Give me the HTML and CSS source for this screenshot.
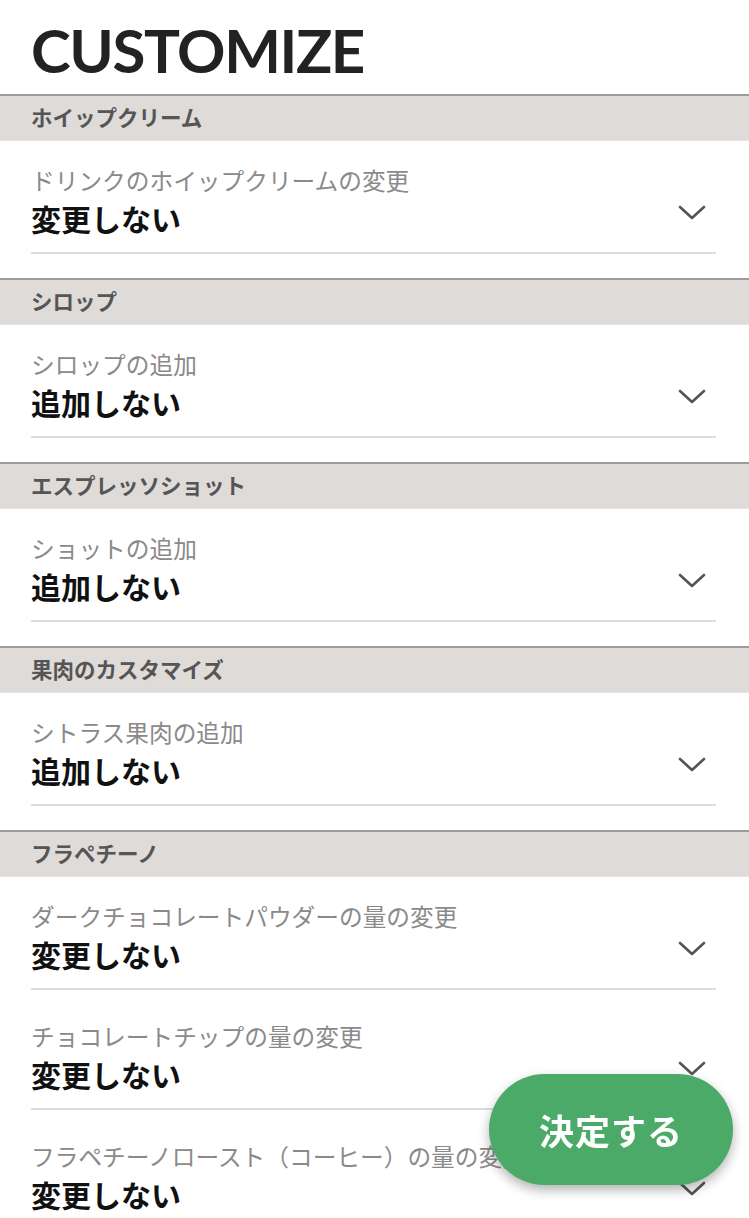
FILE: index.html
```html
<!DOCTYPE html>
<html lang="ja">
<head>
<meta charset="utf-8">
<title>CUSTOMIZE</title>
<link rel="stylesheet" href="styles.css">
</head>
<body>
<header class="page-header">
  <h1 class="title">CUSTOMIZE</h1>
</header>

<section class="group">
  <h2 class="group-title">ホイップクリーム</h2>
  <div class="option">
    <div class="option-label">ドリンクのホイップクリームの変更</div>
    <div class="option-value"><span>変更しない</span><svg class="chev" viewBox="0 0 28 16"><path d="M2 2 L14 13 L26 2"/></svg></div>
  </div>
</section>

<section class="group">
  <h2 class="group-title">シロップ</h2>
  <div class="option">
    <div class="option-label">シロップの追加</div>
    <div class="option-value"><span>追加しない</span><svg class="chev" viewBox="0 0 28 16"><path d="M2 2 L14 13 L26 2"/></svg></div>
  </div>
</section>

<section class="group">
  <h2 class="group-title">エスプレッソショット</h2>
  <div class="option">
    <div class="option-label">ショットの追加</div>
    <div class="option-value"><span>追加しない</span><svg class="chev" viewBox="0 0 28 16"><path d="M2 2 L14 13 L26 2"/></svg></div>
  </div>
</section>

<section class="group">
  <h2 class="group-title">果肉のカスタマイズ</h2>
  <div class="option">
    <div class="option-label">シトラス果肉の追加</div>
    <div class="option-value"><span>追加しない</span><svg class="chev" viewBox="0 0 28 16"><path d="M2 2 L14 13 L26 2"/></svg></div>
  </div>
</section>

<section class="group">
  <h2 class="group-title">フラペチーノ</h2>
  <div class="option">
    <div class="option-label">ダークチョコレートパウダーの量の変更</div>
    <div class="option-value"><span>変更しない</span><svg class="chev" viewBox="0 0 28 16"><path d="M2 2 L14 13 L26 2"/></svg></div>
  </div>
  <div class="option">
    <div class="option-label">チョコレートチップの量の変更</div>
    <div class="option-value"><span>変更しない</span><svg class="chev" viewBox="0 0 28 16"><path d="M2 2 L14 13 L26 2"/></svg></div>
  </div>
  <div class="option">
    <div class="option-label">フラペチーノロースト（コーヒー）の量の変更</div>
    <div class="option-value"><span>変更しない</span><svg class="chev" viewBox="0 0 28 16"><path d="M2 2 L14 13 L26 2"/></svg></div>
  </div>
</section>

<button class="confirm" type="button">決定する</button>
</body>
</html>
```

FILE: styles.css
```css
html, body {
  margin: 0;
  padding: 0;
  background: #ffffff;
}

body {
  font-family: "Noto Sans CJK JP", "Noto Sans", sans-serif;
  color: #111111;
  overflow: hidden;
  height: 1218px;
}

.page-header {
  height: 94px;
  padding: 0 0 0 31px;
  box-sizing: border-box;
}

.title {
  margin: 0;
  padding-top: 14px;
  font-family: "Lato", "Liberation Sans", sans-serif;
  font-weight: 700;
  font-size: 60px;
  line-height: 72px;
  letter-spacing: -1.4px;
  color: #222222;
}

.group {
  padding-bottom: 24px;
}

.group-title {
  margin: 0;
  height: 47px;
  box-sizing: border-box;
  border-top: 2px solid #9c9c9c;
  border-bottom: 1px solid #e6e3e0;
  background: #dedbd8;
  padding-left: 31px;
  font-size: 21.5px;
  font-weight: 700;
  line-height: 42px;
  color: #555555;
}

.option {
  margin: 0 33px 0 31px;
  padding: 21px 0 14px;
  border-bottom: 2px solid #dddddd;
}

.option + .option {
  padding-top: 28px;
}

.option-label {
  font-size: 23.7px;
  line-height: 36px;
  color: #8a8a8a;
  white-space: nowrap;
}

.option-value {
  display: flex;
  align-items: center;
  justify-content: space-between;
  height: 40px;
  font-size: 30px;
  font-weight: 700;
  line-height: 40px;
  color: #111111;
}

.chev {
  width: 28px;
  height: 16px;
  margin-right: 10px;
  margin-bottom: 10px;
  fill: none;
  stroke: #555555;
  stroke-width: 2.6;
  stroke-linecap: round;
  stroke-linejoin: round;
}

.confirm {
  position: fixed;
  right: 16px;
  bottom: 33px;
  width: 244px;
  height: 111px;
  border: none;
  border-radius: 56px;
  background: #4caa69;
  color: #ffffff;
  font-family: "Noto Sans CJK JP", sans-serif;
  font-size: 35px;
  font-weight: 700;
  letter-spacing: 1px;
  box-shadow: 0 5px 12px rgba(0, 0, 0, 0.3);
  padding: 0;
}
```
